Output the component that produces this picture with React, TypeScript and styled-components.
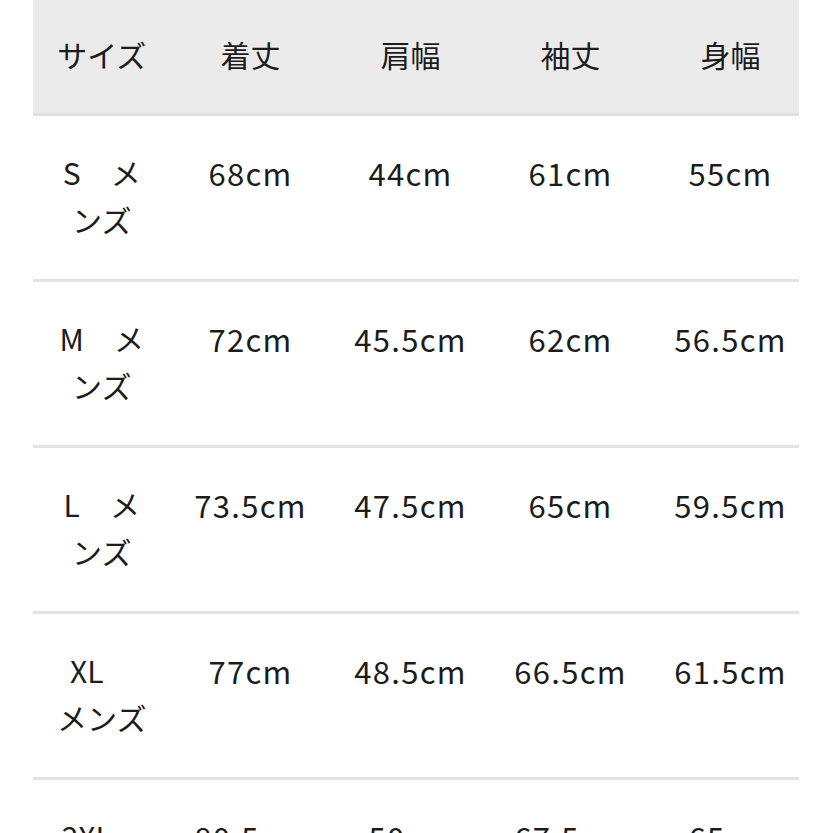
import React from "react";
import styled, { createGlobalStyle } from "styled-components";

const Global = createGlobalStyle`
  html, body { margin: 0; padding: 0; background: #ffffff; }
  body { font-family: "Noto Sans CJK JP", "Noto Sans", sans-serif; color: #1c1c1c; overflow: hidden; }
`;

const Table = styled.div`
  width: 766px;
  margin-left: 33px;
`;

const Row = styled.div<{ $head?: boolean }>`
  display: grid;
  grid-template-columns: 137.5px repeat(3, 160px) 148.5px;
  box-sizing: border-box;
  height: ${(p) => (p.$head ? "116px" : "166px")};
  background: ${(p) => (p.$head ? "#ebebeb" : "#ffffff")};
  border-bottom: 3px solid ${(p) => (p.$head ? "#e0e0e0" : "#e2e2e2")};
  align-items: ${(p) => (p.$head ? "center" : "start")};
  padding-top: ${(p) => (p.$head ? "0" : "33px")};
`;

const Cell = styled.div<{ $last?: boolean; $head?: boolean }>`
  font-size: ${(p) => (p.$head ? "30px" : "31px")};
  line-height: 48px;
  text-align: center;
  white-space: nowrap;
  margin-right: ${(p) => (p.$last ? "-11.5px" : "0")};
  letter-spacing: ${(p) => (p.$head ? "0" : "1.3px")};
  margin-top: ${(p) => (p.$head ? "-6px" : "0")};
`;

const SizeCell = styled.div`
  font-size: 30px;
  line-height: 47px;
  text-align: center;
  display: flex;
  flex-direction: column;
  align-items: center;
`;

const SizeLine = styled.span`
  white-space: pre;
`;

const heads = ["サイズ", "着丈", "肩幅", "袖丈", "身幅"];

const rows: { size: [string, string]; vals: string[] }[] = [
  { size: ["S　メ", "ンズ"], vals: ["68cm", "44cm", "61cm", "55cm"] },
  { size: ["M　メ", "ンズ"], vals: ["72cm", "45.5cm", "62cm", "56.5cm"] },
  { size: ["L　メ", "ンズ"], vals: ["73.5cm", "47.5cm", "65cm", "59.5cm"] },
  { size: ["XL　", "メンズ"], vals: ["77cm", "48.5cm", "66.5cm", "61.5cm"] },
  { size: ["2XL　", "メンズ"], vals: ["80.5cm", "50cm", "67.5cm", "65cm"] },
];

export default function App() {
  return (
    <>
      <Global />
      <Table>
        <Row $head>
          {heads.map((h, i) => (
            <Cell key={h} $head $last={i === 4}>
              {h}
            </Cell>
          ))}
        </Row>
        {rows.map((r) => (
          <Row key={r.size.join("")}>
            <SizeCell>
              <SizeLine>{r.size[0]}</SizeLine>
              <SizeLine>{r.size[1]}</SizeLine>
            </SizeCell>
            {r.vals.map((c, i) => (
              <Cell key={i} $last={i === 3}>
                {c}
              </Cell>
            ))}
          </Row>
        ))}
      </Table>
    </>
  );
}
